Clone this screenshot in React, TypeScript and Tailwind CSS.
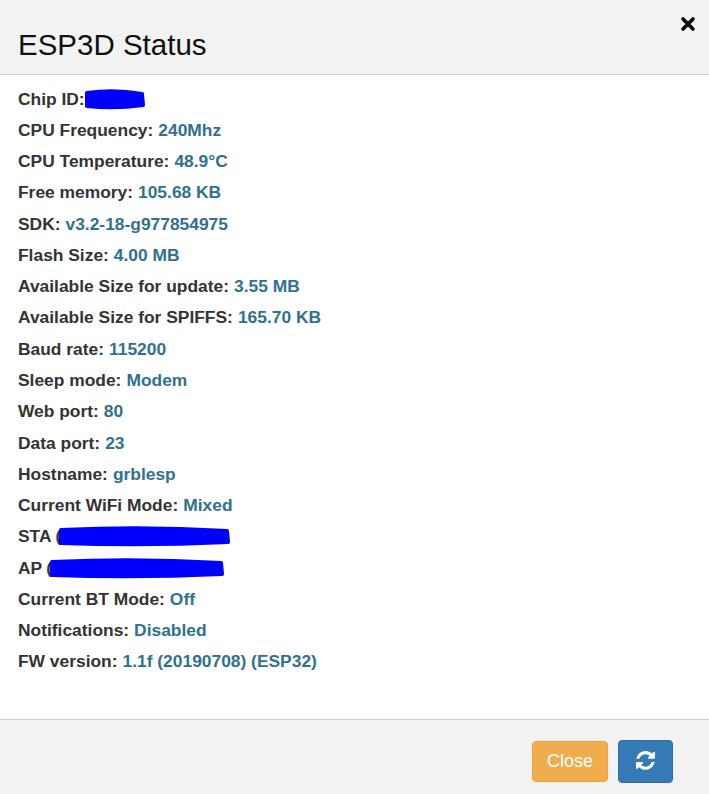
import React from "react";

type Row = { label: string; value?: string; redact?: "chip" | "sta" | "ap" };

const rows: Row[] = [
  { label: "Chip ID:", redact: "chip" },
  { label: "CPU Frequency:", value: "240Mhz" },
  { label: "CPU Temperature:", value: "48.9°C" },
  { label: "Free memory:", value: "105.68 KB" },
  { label: "SDK:", value: "v3.2-18-g977854975" },
  { label: "Flash Size:", value: "4.00 MB" },
  { label: "Available Size for update:", value: "3.55 MB" },
  { label: "Available Size for SPIFFS:", value: "165.70 KB" },
  { label: "Baud rate:", value: "115200" },
  { label: "Sleep mode:", value: "Modem" },
  { label: "Web port:", value: "80" },
  { label: "Data port:", value: "23" },
  { label: "Hostname:", value: "grblesp" },
  { label: "Current WiFi Mode:", value: "Mixed" },
  { label: "STA", redact: "sta" },
  { label: "AP", redact: "ap" },
  { label: "Current BT Mode:", value: "Off" },
  { label: "Notifications:", value: "Disabled" },
  { label: "FW version:", value: "1.1f (20190708) (ESP32)" },
];

const Scribble = ({ w }: { w: number }) => (
  <svg width={w} height="22" viewBox={`0 0 ${w} 22`} className="block">
    <path
      d={`M4 5 Q${w / 2} 1 ${w - 4} 6 L${w - 3} 17 Q${w / 2} 21 4 18 Z`}
      fill="#0000ff"
      stroke="#0000ff"
      strokeWidth="4"
      strokeLinejoin="round"
    />
  </svg>
);

const RefreshIcon = () => (
  <svg width="19" height="22" viewBox="0 0 1536 1792" fill="white">
    <path d="M1511 928q0 5-1 7-64 268-268 434.5t-478 166.5q-146 0-282.5-55t-243.5-157l-129 129q-19 19-45 19t-45-19-19-45v-448q0-26 19-45t45-19h448q26 0 45 19t19 45-19 45l-137 137q71 66 161 102t187 36q134 0 250-65t186-179q11-17 53-117 8-23 30-23h192q13 0 22.5 9.5t9.5 22.5zm25-800v448q0 26-19 45t-45 19h-448q-26 0-45-19t-19-45 19-45l138-138q-148-137-349-137-134 0-250 65t-186 179q-11 17-53 117-8 23-30 23h-199q-13 0-22.5-9.5t-9.5-22.5v-7q65-268 270-434.5t480-166.5q146 0 284 55.5t245 156.5l130-129q19-19 45-19t45 19 19 45z" />
  </svg>
);

export default function App() {
  return (
    <div className="w-[709px] h-[794px] flex flex-col bg-white font-['Liberation_Sans',Arial,sans-serif] text-[#333]">
      <div className="h-[75px] shrink-0 bg-[#f2f2f2] border-b border-[#cfcfcf] flex items-start justify-between pl-[18px] pr-[13px]">
        <h4 className="text-[29.5px] leading-none mt-[30px] text-[#111]">ESP3D Status</h4>
        <button className="mt-[16px]">
          <svg width="16" height="16" viewBox="0 0 16 16">
            <path d="M3 3 L13 13 M13 3 L3 13" stroke="black" strokeWidth="3.6" strokeLinecap="round" />
          </svg>
        </button>
      </div>

      <div className="flex-1 pt-[8px] px-[18px]">
        {rows.map((r) => (
          <div key={r.label} className="h-[31.28px] flex items-center text-[17.4px] font-bold whitespace-nowrap">
            <span>{r.label}</span>
            {r.value && <span className="ml-[5px] text-[#31708f]">{r.value}</span>}
            {r.redact === "chip" && (
              <span className="-ml-[2px]">
                <Scribble w={63} />
              </span>
            )}
            {r.redact === "sta" && (
              <span className="ml-[4px] flex items-center">
                <span>(</span>
                <span className="-ml-[4px]">
                  <Scribble w={174} />
                </span>
              </span>
            )}
            {r.redact === "ap" && (
              <span className="ml-[4px] flex items-center">
                <span>(</span>
                <span className="-ml-[4px]">
                  <Scribble w={177} />
                </span>
              </span>
            )}
          </div>
        ))}
      </div>

      <div className="h-[75px] shrink-0 bg-[#f2f2f2] border-t border-[#cfcfcf] flex items-start justify-end gap-[10px] pr-[36px] pt-[20px]">
        <button className="mt-[1px] w-[76px] h-[41px] rounded-[4px] bg-[#f0ad4e] border border-[#eea236] text-white text-[18px]">
          Close
        </button>
        <button className="w-[55px] h-[43px] rounded-[4px] bg-[#337ab7] border border-[#2e6da4] flex items-center justify-center">
          <RefreshIcon />
        </button>
      </div>
    </div>
  );
}
